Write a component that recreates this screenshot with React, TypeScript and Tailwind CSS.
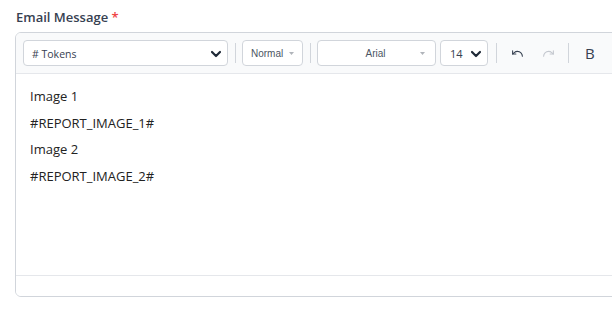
import React from "react";
import { Undo, Redo } from "lucide-react";

function Chevron() {
  return (
    <svg width="12" height="12" viewBox="0 0 12 12">
      <path d="M2 4 L6 8 L10 4" fill="none" stroke="#1f2937" strokeWidth="2.2" strokeLinecap="round" strokeLinejoin="round" />
    </svg>
  );
}

function Caret() {
  return (
    <svg width="5" height="3" viewBox="0 0 5 3">
      <path d="M0 0 L5 0 L2.5 3 Z" fill="#b0b4ba" />
    </svg>
  );
}

function Sep() {
  return <div className="w-px h-[20px] bg-[#d1d5db]" />;
}

const arial = { fontFamily: '"Liberation Sans", Arial, sans-serif' };

export default function App() {
  return (
    <div
      className="w-[612px] h-[310px] overflow-hidden bg-white pl-[15px] pt-[9px]"
      style={{ fontFamily: '"Open Sans", "Noto Sans", sans-serif' }}
    >
      <div className="text-[13px] leading-[16px] font-semibold text-[#374151] pl-px">
        Email Message <span className="text-[#ef4444]">*</span>
      </div>
      <div className="mt-[7px] w-[640px] border border-[#d1d5db] rounded-md overflow-hidden">
        <div className="h-[41px] bg-[#f9fafb] border-b border-[#e5e7eb] flex items-center pl-[7px]">
          <div className="w-[205px] h-[26px] bg-white border border-[#d1d5db] rounded flex items-center justify-between pl-[8px] pr-[5px]">
            <span className="text-[10.5px] leading-[14px] pt-[2px] text-[#374151]">
              # Tokens
            </span>
            <span className="pt-[1px] flex">
              <Chevron />
            </span>
          </div>
          <div className="ml-[7px] mr-[6px]">
            <Sep />
          </div>
          <div className="w-[61px] h-[26px] bg-white border border-[#d1d5db] rounded flex items-center pl-[8px] gap-[6px]">
            <span className="text-[10px] text-[#4b5563]" style={arial}>Normal</span>
            <Caret />
          </div>
          <div className="ml-[7px] mr-[6px]">
            <Sep />
          </div>
          <div className="w-[119px] h-[26px] bg-white border border-[#d1d5db] rounded flex items-center relative">
            <span className="flex-1 text-center text-[10px] text-[#4b5563] pr-[2px]" style={arial}>Arial</span>
            <span className="absolute right-[10px] top-[11px] flex">
              <Caret />
            </span>
          </div>
          <div className="ml-[4px] w-[48px] h-[26px] bg-white border border-[#d1d5db] rounded flex items-center justify-between pl-[9px] pr-[5px]">
            <span className="text-[11px] leading-[14px] pt-[2px] text-[#374151]">14</span>
            <span className="pt-[1px] flex">
              <Chevron />
            </span>
          </div>
          <div className="ml-[8px]">
            <Sep />
          </div>
          <div className="ml-[14px] flex items-center text-[#374151]">
            <Undo size={13} strokeWidth={2} />
          </div>
          <div className="ml-[18px] flex items-center text-[#c4c8cf]">
            <Redo size={13} strokeWidth={2} />
          </div>
          <div className="ml-[13px]">
            <Sep />
          </div>
          <div className="ml-[16px] text-[15px] text-[#374151] leading-none">B</div>
        </div>
        <div className="h-[201px] bg-white pt-[9px] pl-[14px] text-[13px] text-[#222222]">
          <p className="leading-[26.6px]">Image 1</p>
          <p className="leading-[26.6px]">#REPORT_IMAGE_1#</p>
          <p className="leading-[26.6px]">Image 2</p>
          <p className="leading-[26.6px]">#REPORT_IMAGE_2#</p>
        </div>
        <div className="h-[21px] border-t border-[#e5e7eb] bg-white" />
      </div>
    </div>
  );
}
